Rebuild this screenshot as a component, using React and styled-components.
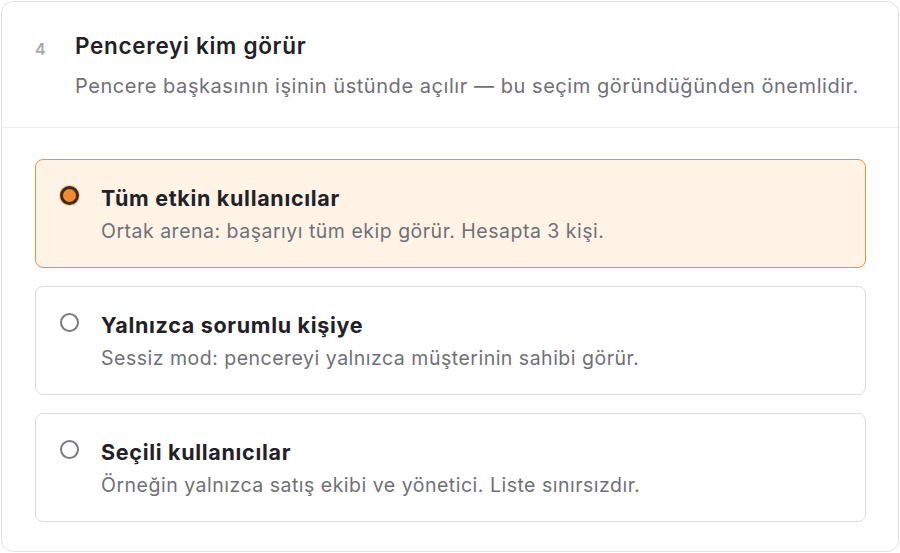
import React, { useState } from 'react';
import styled, { createGlobalStyle } from 'styled-components';

const GlobalStyle = createGlobalStyle`
  html, body {
    margin: 0;
    padding: 0;
    background: #ffffff;
  }
  body {
    font-family: Inter, "Noto Sans", "Liberation Sans", sans-serif;
    -webkit-font-smoothing: antialiased;
  }
`;

const Page = styled.div`
  padding: 1px;
  width: 900px;
  height: 553px;
  box-sizing: border-box;
`;

const Card = styled.section`
  width: 100%;
  height: 100%;
  box-sizing: border-box;
  border: 1px solid #e2e2e5;
  border-radius: 12px;
  background: #fff;
  display: flex;
  flex-direction: column;
  overflow: hidden;
`;

const Header = styled.header`
  display: flex;
  align-items: flex-start;
  padding: 30px 20px 28px 33px;
  border-bottom: 1px solid #ececef;
`;

const StepNumber = styled.span`
  width: 40px;
  flex-shrink: 0;
  font-size: 16px;
  font-weight: 600;
  color: #a8a8ad;
  line-height: 28px;
  padding-top: 3px;
`;

const HeaderText = styled.div`
  display: flex;
  flex-direction: column;
  gap: 13px;
`;

const Title = styled.h2`
  margin: 0;
  font-size: 22.5px;
  line-height: 28px;
  font-weight: 600;
  color: #222226;
  letter-spacing: 0.7px;
`;

const Subtitle = styled.p`
  margin: 0;
  font-size: 20px;
  line-height: 26px;
  color: #707076;
  letter-spacing: 0.55px;
  white-space: nowrap;
`;

const OptionList = styled.div`
  display: flex;
  flex-direction: column;
  gap: 18px;
  padding: 31px 32px 30px 33px;
`;

const Option = styled.label`
  display: flex;
  align-items: flex-start;
  gap: 22px;
  padding: 23.5px 30px 23.5px 24px;
  border-radius: 8px;
  border: 1px solid ${p => (p.$active ? '#f0913a' : '#dcdce0')};
  background: ${p => (p.$active ? '#fff3e6' : '#ffffff')};
  cursor: pointer;
`;

const Radio = styled.span`
  flex-shrink: 0;
  width: 19px;
  height: 19px;
  margin-top: 2px;
  box-sizing: border-box;
  border-radius: 50%;
  border: ${p => (p.$checked ? '3px solid #3d2c1e' : '2px solid #7a7a7f')};
  background: ${p => (p.$checked ? '#f28b2c' : '#ffffff')};
  box-shadow: ${p => (p.$checked ? '0 0 0 1px rgba(242,139,44,0.45)' : 'none')};
`;

const OptionText = styled.div`
  display: flex;
  flex-direction: column;
  gap: 6px;
`;

const OptionTitle = styled.span`
  font-size: 21.5px;
  line-height: 28px;
  font-weight: 700;
  color: #222226;
  letter-spacing: 0.7px;
`;

const OptionDesc = styled.span`
  font-size: 19.5px;
  line-height: 26px;
  color: #707076;
  letter-spacing: 0.5px;
`;

const options = [
  {
    id: 'all',
    title: 'Tüm etkin kullanıcılar',
    desc: 'Ortak arena: başarıyı tüm ekip görür. Hesapta 3 kişi.',
  },
  {
    id: 'owner',
    title: 'Yalnızca sorumlu kişiye',
    desc: 'Sessiz mod: pencereyi yalnızca müşterinin sahibi görür.',
  },
  {
    id: 'selected',
    title: 'Seçili kullanıcılar',
    desc: 'Örneğin yalnızca satış ekibi ve yönetici. Liste sınırsızdır.',
  },
];

const App = () => {
  const [value, setValue] = useState('all');

  return (
    <Page>
      <GlobalStyle />
      <Card>
        <Header>
          <StepNumber>4</StepNumber>
          <HeaderText>
            <Title>Pencereyi kim görür</Title>
            <Subtitle>
              Pencere başkasının işinin üstünde açılır — bu seçim göründüğünden önemlidir.
            </Subtitle>
          </HeaderText>
        </Header>
        <OptionList>
          {options.map(o => (
            <Option key={o.id} $active={value === o.id} onClick={() => setValue(o.id)}>
              <Radio $checked={value === o.id} />
              <OptionText>
                <OptionTitle>{o.title}</OptionTitle>
                <OptionDesc>{o.desc}</OptionDesc>
              </OptionText>
            </Option>
          ))}
        </OptionList>
      </Card>
    </Page>
  );
};

export default App;
